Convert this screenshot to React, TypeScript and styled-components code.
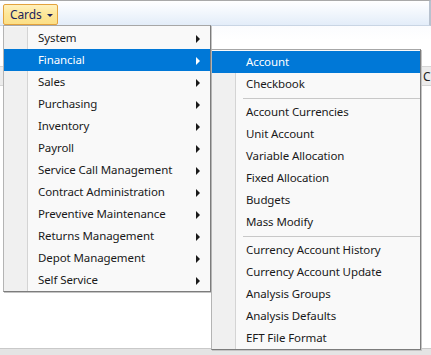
import React from "react";
import styled, { createGlobalStyle } from "styled-components";

const Global = createGlobalStyle`
  html, body { margin: 0; padding: 0; background: #ffffff; }
  body { font-family: "Noto Sans", "Open Sans", sans-serif; font-size: 11.5px; letter-spacing: -0.1px; }
  #root { width: 431px; height: 355px; overflow: hidden; }
`;

const Window = styled.div`
  position: relative;
  width: 431px;
  height: 355px;
  display: flex;
  flex-direction: column;
  background: #ffffff;
  overflow: hidden;
`;

const Toolbar = styled.div`
  height: 26px;
  flex: none;
  box-sizing: border-box;
  border-top: 1px solid #a9a9a9;
  border-bottom: 1px solid #c9d5e4;
  border-right: 2px solid #b8c2cf;
  background: linear-gradient(#ffffff 0%, #f4f8fd 40%, #e3edf9 100%);
  display: flex;
  align-items: flex-start;
  padding: 3px 0 0 3px;
`;

const CardsButton = styled.div`
  height: 21px;
  width: 55px;
  box-sizing: border-box;
  border: 1px solid #e3a23c;
  border-radius: 2px;
  background: linear-gradient(#fff1be 0%, #fde79a 45%, #fcdf86 100%);
  display: flex;
  align-items: center;
  padding-left: 6px;
  padding-right: 4px;
  color: #1b1f5c;
  font-size: 12px;
`;

const ButtonText = styled.span`
  flex: 1;
`;

const DownArrow = styled.span`
  width: 0;
  height: 0;
  border-left: 3px solid transparent;
  border-right: 3px solid transparent;
  border-top: 3px solid #1b1f5c;
  margin-top: 2px;
`;

const Content = styled.div`
  flex: 1;
  display: flex;
  flex-direction: column;
  background: linear-gradient(#fbfcfe 0px, #ffffff 14px);
`;

const Spacer = styled.div<{ $h: number }>`
  height: ${(p) => p.$h}px;
  flex: none;
`;

const GridHeader = styled.div`
  height: 18px;
  flex: none;
  background: #ececec;
  border-top: 1px solid #d6d6d6;
  border-bottom: 1px solid #d6d6d6;
  display: flex;
  align-items: center;
  justify-content: flex-end;
  color: #222;
  font-size: 12px;
`;

const HeaderCell = styled.div`
  width: 8px;
  overflow: hidden;
  white-space: nowrap;
`;

const Fill = styled.div`
  flex: 1;
`;

const StatusBand = styled.div`
  height: 6px;
  flex: none;
  background: #e4e4e4;
  border-top: 1px solid #c9c9c9;
`;

const Menu = styled.div<{ $left: number; $top: number; $width: number }>`
  position: absolute;
  left: ${(p) => p.$left}px;
  top: ${(p) => p.$top}px;
  width: ${(p) => p.$width}px;
  box-sizing: border-box;
  background: #f9f9f9;
  border-top: 1px solid #a7a7a7;
  border-left: 1px solid #b4b4b4;
  border-right: 1px solid #7c7c7c;
  border-bottom: 1px solid #7c7c7c;
  box-shadow: 1px 1px 0 #c4c4c4;
  padding: 1px 0 0 0;
  display: flex;
  flex-direction: column;
`;

const Item = styled.div<{ $active?: boolean }>`
  height: 22px;
  display: flex;
  align-items: stretch;
  background: ${(p) => (p.$active ? "#0078d7" : "transparent")};
  color: ${(p) => (p.$active ? "#ffffff" : "#1a1a1a")};
`;

const Gutter = styled.div<{ $active?: boolean }>`
  width: 23px;
  flex: none;
  background: ${(p) => (p.$active ? "transparent" : "#f0f0f0")};
  border-right: 1px solid ${(p) => (p.$active ? "transparent" : "#d4d4d4")};
`;

const Label = styled.div`
  flex: 1;
  display: flex;
  align-items: center;
  padding-left: 10px;
  white-space: nowrap;
  line-height: 1;
`;

const Arrow = styled.span<{ $active?: boolean }>`
  align-self: center;
  width: 0;
  height: 0;
  border-top: 4px solid transparent;
  border-bottom: 4px solid transparent;
  border-left: 4px solid ${(p) => (p.$active ? "#ffffff" : "#1a1a1a")};
  margin-right: 10px;
  margin-top: 1px;
`;

const SepRow = styled.div`
  height: 6px;
  display: flex;
  align-items: stretch;
`;

const SepLine = styled.div`
  flex: 1;
  display: flex;
  align-items: center;
  padding-left: 7px;
  &::after {
    content: "";
    flex: 1;
    height: 1px;
    background: #c8c8c8;
  }
`;

const mainItems = [
  "System",
  "Financial",
  "Sales",
  "Purchasing",
  "Inventory",
  "Payroll",
  "Service Call Management",
  "Contract Administration",
  "Preventive Maintenance",
  "Returns Management",
  "Depot Management",
  "Self Service",
];

const subItems: (string | null)[] = [
  "Account",
  "Checkbook",
  null,
  "Account Currencies",
  "Unit Account",
  "Variable Allocation",
  "Fixed Allocation",
  "Budgets",
  "Mass Modify",
  null,
  "Currency Account History",
  "Currency Account Update",
  "Analysis Groups",
  "Analysis Defaults",
  "EFT File Format",
];

export default function App() {
  return (
    <>
      <Global />
      <Window>
        <Toolbar>
          <CardsButton>
            <ButtonText>Cards</ButtonText>
            <DownArrow />
          </CardsButton>
        </Toolbar>
        <Content>
          <Spacer $h={40} />
          <GridHeader>
            <HeaderCell>C</HeaderCell>
          </GridHeader>
          <Fill />
          <StatusBand />
        </Content>

        <Menu $left={3} $top={25} $width={208}>
          {mainItems.map((t) => {
            const active = t === "Financial";
            return (
              <Item key={t} $active={active}>
                <Gutter $active={active} />
                <Label>{t}</Label>
                <Arrow $active={active} />
              </Item>
            );
          })}
        </Menu>

        <Menu $left={211} $top={49} $width={210}>
          {subItems.map((t, i) => {
            if (t === null) {
              return (
                <SepRow key={"s" + i}>
                  <Gutter />
                  <SepLine />
                </SepRow>
              );
            }
            const active = t === "Account";
            return (
              <Item key={t} $active={active}>
                <Gutter $active={active} />
                <Label>{t}</Label>
              </Item>
            );
          })}
        </Menu>
      </Window>
    </>
  );
}
